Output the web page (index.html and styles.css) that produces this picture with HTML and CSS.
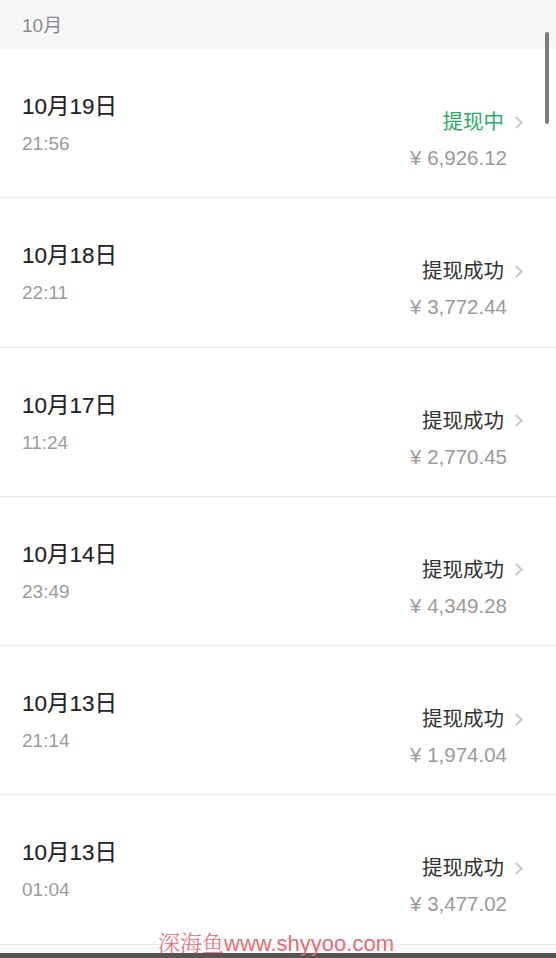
FILE: index.html
```html
<!DOCTYPE html>
<html lang="zh">
<head>
<meta charset="utf-8">
<link rel="stylesheet" href="styles.css">
</head>
<body>
<div class="page">
  <div class="month">10月</div>
  <div class="list">
    <div class="row">
      <div class="left"><div class="date">10月19日</div><div class="time">21:56</div></div>
      <div class="right"><div class="status pending">提现中<span class="chev"></span></div><div class="amount">¥ 6,926.12</div></div>
    </div>
    <div class="row">
      <div class="left"><div class="date">10月18日</div><div class="time">22:11</div></div>
      <div class="right"><div class="status">提现成功<span class="chev"></span></div><div class="amount">¥ 3,772.44</div></div>
    </div>
    <div class="row">
      <div class="left"><div class="date">10月17日</div><div class="time">11:24</div></div>
      <div class="right"><div class="status">提现成功<span class="chev"></span></div><div class="amount">¥ 2,770.45</div></div>
    </div>
    <div class="row">
      <div class="left"><div class="date">10月14日</div><div class="time">23:49</div></div>
      <div class="right"><div class="status">提现成功<span class="chev"></span></div><div class="amount">¥ 4,349.28</div></div>
    </div>
    <div class="row">
      <div class="left"><div class="date">10月13日</div><div class="time">21:14</div></div>
      <div class="right"><div class="status">提现成功<span class="chev"></span></div><div class="amount">¥ 1,974.04</div></div>
    </div>
    <div class="row">
      <div class="left"><div class="date">10月13日</div><div class="time">01:04</div></div>
      <div class="right"><div class="status">提现成功<span class="chev"></span></div><div class="amount">¥ 3,477.02</div></div>
    </div>
  </div>
  <div class="foot"></div>
  <div class="bar"></div>
  <div class="scroll"></div>
  <div class="watermark"><span class="wm-cn">深海鱼</span>www.shyyoo.com</div>
</div>
</body>
</html>
```
FILE: styles.css
```css
* { box-sizing: border-box; margin: 0; padding: 0; }
html, body { width: 556px; height: 958px; overflow: hidden; background: #fff; }
body { font-family: "Liberation Sans", "Noto Sans CJK SC", sans-serif; }
.page { position: relative; width: 556px; height: 958px; display: flex; flex-direction: column; }
.month { height: 49px; background: #f7f7f9; color: #8a8a8a; font-size: 19px; line-height: 52px; padding-left: 22px; }
.list { display: flex; flex-direction: column; }
.row { height: 149.3px; border-bottom: 1px solid #ececec; display: flex; justify-content: space-between; padding: 0 49px 0 22px; }
.left { padding-top: 43px; }
.date { font-size: 22.5px; line-height: 30px; color: #222; font-weight: 400; -webkit-text-stroke: 0.15px #222; }
.time { font-size: 19px; line-height: 26px; color: #9b9b9b; margin-top: 9px; }
.right { padding-top: 59px; display: flex; flex-direction: column; align-items: flex-end; }
.status { font-size: 20.5px; line-height: 28px; color: #333; display: flex; align-items: center; margin-right: -20px; }
.status.pending { color: #2bad66; }
.chev { width: 9px; height: 9px; border-top: 2px solid #c8c8c8; border-right: 2px solid #c8c8c8; transform: rotate(45deg); margin-left: 8px; margin-right: 6px; }
.amount { font-size: 20.5px; line-height: 28px; color: #9a9a9a; margin-top: 8px; }
.foot { flex: 1; background: #f8f8f8; }
.bar { height: 5px; background: #555; }
.scroll { position: absolute; left: 545px; top: 32px; width: 4px; height: 92px; border-radius: 2px; background: #7c7c7c; }
.watermark { position: absolute; left: 158px; top: 929px; font-size: 22px; line-height: 26px; color: #e86d79; font-family: "Liberation Sans", sans-serif; }
.wm-cn { font-family: "Noto Serif CJK SC", "Noto Sans CJK SC", serif; font-weight: 300; }
```
